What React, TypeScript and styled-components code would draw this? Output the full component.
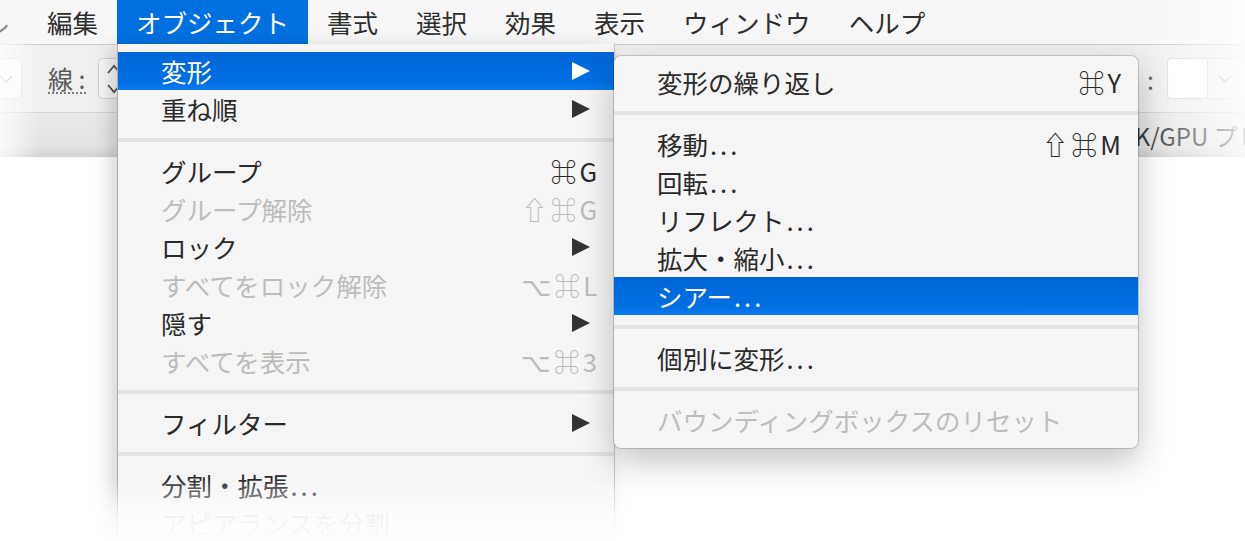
import React from 'react';
import styled, { createGlobalStyle } from 'styled-components';

const FONT = `"Noto Sans CJK JP", "Noto Sans", "DejaVu Sans", sans-serif`;

const GlobalStyle = createGlobalStyle`
  html, body { margin: 0; padding: 0; background: #fff; }
  body { font-family: ${FONT}; }
  * { box-sizing: border-box; }
`;

const Screen = styled.div`
  position: relative;
  width: 1245px;
  height: 541px;
  overflow: hidden;
  background: #fff;
  display: flex;
  flex-direction: column;
  font-family: ${FONT};
`;

/* ---------- menu bar ---------- */
const MenuBar = styled.div`
  flex: none;
  display: flex;
  height: 45px;
  background: #f7f7f7;
  border-bottom: 1px solid #cbcbcb;
`;

const MenuTitle = styled.div<{ $active?: boolean }>`
  padding: 0 19px;
  line-height: 44px;
  font-size: 25.5px;
  white-space: nowrap;
  color: ${(p) => (p.$active ? '#fff' : '#2e2e2e')};
  background: ${(p) => (p.$active ? '#0070e0' : 'transparent')};
`;

const LeadTitle = styled(MenuTitle)`
  margin-left: -112px;
  color: #8a8a8a;
`;

/* ---------- toolbar ---------- */
const Toolbar = styled.div`
  flex: none;
  display: flex;
  align-items: center;
  height: 68px;
  background: #efefef;
  border-bottom: 1px solid #d3d3d3;
`;

const StubBox = styled.div`
  width: 40px;
  height: 41px;
  margin-left: -18px;
  background: #fafafa;
  border: 1px solid #dedede;
  border-radius: 5px;
  display: flex;
  align-items: center;
  justify-content: flex-end;
  padding-right: 8px;
`;

const FieldLabel = styled.span`
  margin-left: 26px;
  font-size: 25px;
  line-height: 28px;
  color: #5a5a5a;
  border-bottom: 2px dotted #7a7a7a;
  white-space: nowrap;
`;

const Spinner = styled.div`
  width: 44px;
  height: 41px;
  margin-left: 12px;
  background: #f6f6f6;
  border: 1px solid #d2d2d2;
  border-radius: 5px;
  display: flex;
  align-items: center;
  padding-left: 8px;
`;

const RightGroup = styled.div`
  margin-left: auto;
  margin-right: -12px;
  display: flex;
  align-items: center;
`;

const Colon = styled.span`
  font-size: 25px;
  color: #666;
  margin-right: 13px;
`;

const WhiteBox = styled.div`
  width: 40px;
  height: 41px;
  background: #fff;
  border: 1px solid #dadada;
  border-right: none;
  border-radius: 4px 0 0 4px;
`;

const DropBox = styled.div`
  width: 50px;
  height: 41px;
  background: #f4f4f4;
  border: 1px solid #dadada;
  display: flex;
  align-items: center;
  padding-left: 10px;
`;

/* ---------- tab bar ---------- */
const TabBar = styled.div`
  flex: none;
  height: 44px;
  display: flex;
  align-items: center;
  background: linear-gradient(#e9e9e9, #e4e4e4 75%, #d2d2d2);
`;

const TabText = styled.span`
  margin-left: 1079px;
  font-size: 24px;
  color: #3c3c3c;
  white-space: nowrap;
`;

const Canvas = styled.div`
  flex: 1;
  background: #fff;
`;

/* ---------- menus ---------- */
const MainMenu = styled.div`
  position: absolute;
  left: 117px;
  top: 44px;
  width: 498px;
  height: 520px;
  padding-top: 8px;
  background: #f5f5f5;
  border-left: 1px solid #aeaeae;
  border-right: 1px solid #c6c6c6;
  box-shadow: -6px 4px 18px rgba(0, 0, 0, 0.18);
`;

const SubMenu = styled.div`
  position: absolute;
  left: 614px;
  top: 56px;
  width: 524px;
  padding: 7px 0 9px;
  background: #f5f5f5;
  border-radius: 7px;
  box-shadow: 0 0 0 1px rgba(0, 0, 0, 0.16), 0 14px 34px rgba(0, 0, 0, 0.24);
`;

const Row = styled.div<{ $active?: boolean; $disabled?: boolean }>`
  display: flex;
  align-items: center;
  height: 38px;
  padding: 0 17px 0 43px;
  font-size: 25.5px;
  line-height: 38px;
  white-space: nowrap;
  color: ${(p) => (p.$active ? '#fff' : p.$disabled ? '#bdbdbd' : '#2a2a2a')};
  background: ${(p) =>
    p.$active ? 'linear-gradient(#0066d8, #006fe2 80%, #0a7cf2)' : 'transparent'};
`;

const Label = styled.span`
  flex: 1;
`;

const Dots = styled.span`
  margin-left: 2px;
  letter-spacing: 3px;
`;

const Shortcut = styled.span`
  display: flex;
  align-items: center;
  gap: 3px;
  font-size: 25.5px;
`;

const KeyGlyph = styled.span`
  font-family: "Noto Sans CJK JP", "DejaVu Sans", sans-serif;
  font-size: 26px;
  line-height: 38px;
`;

const ArrowWrap = styled.span`
  display: flex;
  margin-right: 7px;
`;

const Separator = styled.div`
  height: 24px;
  display: flex;
  align-items: center;
  &::before {
    content: '';
    flex: 1;
    height: 4px;
    background: #e3e3e3;
  }
`;

/* ---------- vignette overlays ---------- */
const RightFade = styled.div`
  position: absolute;
  top: 0;
  right: 0;
  width: 100px;
  height: 160px;
  background: linear-gradient(to right, rgba(255, 255, 255, 0), rgba(255, 255, 255, 0.85));
  pointer-events: none;
`;

const LeftFade = styled.div`
  position: absolute;
  top: 44px;
  left: 0;
  width: 40px;
  height: 116px;
  background: linear-gradient(to left, rgba(255, 255, 255, 0), rgba(255, 255, 255, 0.8));
  pointer-events: none;
`;

const BottomFade = styled.div`
  position: absolute;
  left: 0;
  right: 0;
  bottom: 0;
  height: 62px;
  background: linear-gradient(rgba(255, 255, 255, 0), rgba(255, 255, 255, 0.8) 60%, rgba(255, 255, 255, 0.97));
  pointer-events: none;
`;

/* ---------- icons ---------- */
const Triangle = ({ color }: { color: string }) => (
  <svg width="18" height="18" viewBox="0 0 18 18">
    <polygon points="0,0 18,9 0,18" fill={color} />
  </svg>
);

const ChevronDown = ({ color = '#b5b5b5' }: { color?: string }) => (
  <svg width="14" height="8" viewBox="0 0 14 8">
    <polyline points="1,1 7,7 13,1" fill="none" stroke={color} strokeWidth="1.4" />
  </svg>
);

const UpDown = () => (
  <svg width="14" height="30" viewBox="0 0 14 30">
    <polyline points="1,9 7,2 13,9" fill="none" stroke="#555" strokeWidth="1.8" />
    <polyline points="1,21 7,28 13,21" fill="none" stroke="#555" strokeWidth="1.8" />
  </svg>
);

/* ---------- data ---------- */
type Item =
  | 'sep'
  | {
      label: string;
      dots?: boolean;
      keys?: string[];
      arrow?: boolean;
      active?: boolean;
      disabled?: boolean;
    };

const mainItems: Item[] = [
  { label: '変形', arrow: true, active: true },
  { label: '重ね順', arrow: true },
  'sep',
  { label: 'グループ', keys: ['⌘', 'G'] },
  { label: 'グループ解除', keys: ['⇧', '⌘', 'G'], disabled: true },
  { label: 'ロック', arrow: true },
  { label: 'すべてをロック解除', keys: ['⌥', '⌘', 'L'], disabled: true },
  { label: '隠す', arrow: true },
  { label: 'すべてを表示', keys: ['⌥', '⌘', '3'], disabled: true },
  'sep',
  { label: 'フィルター', arrow: true },
  'sep',
  { label: '分割・拡張', dots: true },
  { label: 'アピアランスを分割', disabled: true },
];

const subItems: Item[] = [
  { label: '変形の繰り返し', keys: ['⌘', 'Y'] },
  'sep',
  { label: '移動', dots: true, keys: ['⇧', '⌘', 'M'] },
  { label: '回転', dots: true },
  { label: 'リフレクト', dots: true },
  { label: '拡大・縮小', dots: true },
  { label: 'シアー', dots: true, active: true },
  'sep',
  { label: '個別に変形', dots: true },
  'sep',
  { label: 'バウンディングボックスのリセット', disabled: true },
];

const isSymbol = (k: string) => k === '⌘' || k === '⇧' || k === '⌥';

const MenuRows = ({ items }: { items: Item[] }) => (
  <>
    {items.map((it, i) => {
      if (it === 'sep') return <Separator key={i} />;
      return (
        <Row key={i} $active={it.active} $disabled={it.disabled}>
          <Label>
            {it.label}
            {it.dots && <Dots>...</Dots>}
          </Label>
          {it.keys && (
            <Shortcut>
              {it.keys.map((k, j) =>
                isSymbol(k) ? <KeyGlyph key={j}>{k}</KeyGlyph> : <span key={j}>{k}</span>
              )}
            </Shortcut>
          )}
          {it.arrow && (
            <ArrowWrap>
              <Triangle color={it.active ? '#fff' : '#333'} />
            </ArrowWrap>
          )}
        </Row>
      );
    })}
  </>
);

const menuTitles = ['編集', 'オブジェクト', '書式', '選択', '効果', '表示', 'ウィンドウ', 'ヘルプ'];

export default function App() {
  return (
    <>
      <GlobalStyle />
      <Screen>
        <MenuBar>
          <LeadTitle>ファイル</LeadTitle>
          {menuTitles.map((t) => (
            <MenuTitle key={t} $active={t === 'オブジェクト'}>
              {t}
            </MenuTitle>
          ))}
        </MenuBar>
        <Toolbar>
          <StubBox>
            <ChevronDown />
          </StubBox>
          <FieldLabel>線 :</FieldLabel>
          <Spinner>
            <UpDown />
          </Spinner>
          <RightGroup>
            <Colon>:</Colon>
            <WhiteBox />
            <DropBox>
              <ChevronDown />
            </DropBox>
          </RightGroup>
        </Toolbar>
        <TabBar>
          <TabText>(CMYK/GPU プレビュー)</TabText>
        </TabBar>
        <Canvas />

        <MainMenu>
          <MenuRows items={mainItems} />
        </MainMenu>
        <SubMenu>
          <MenuRows items={subItems} />
        </SubMenu>

        <RightFade />
        <LeftFade />
        <BottomFade />
      </Screen>
    </>
  );
}
